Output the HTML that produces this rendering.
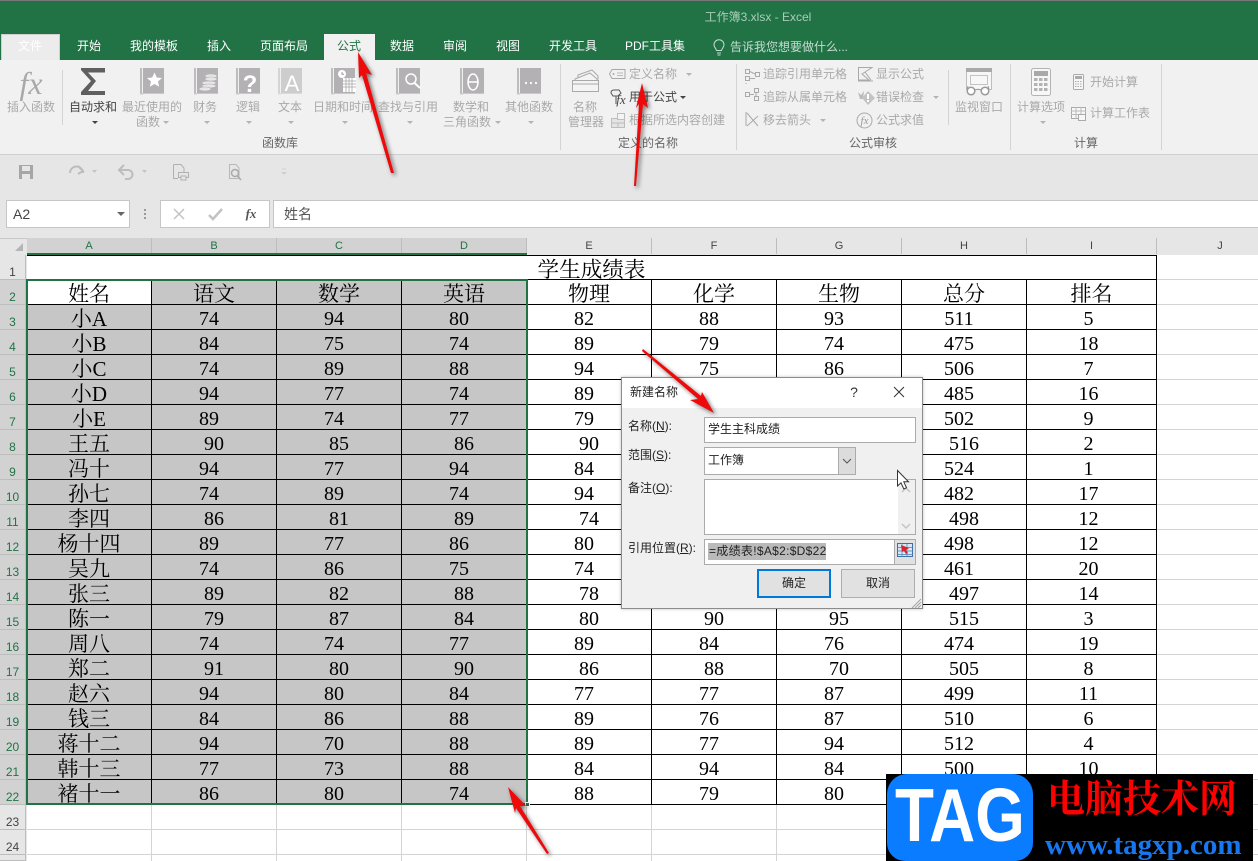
<!DOCTYPE html>
<html lang="zh"><head><meta charset="utf-8"><title>工作簿3.xlsx - Excel</title>
<style>
*{box-sizing:border-box}
html{margin:0;padding:0;width:1258px;height:861px;overflow:hidden}
body{margin:0;padding:0;width:1258px;height:861px;overflow:hidden;position:relative;background:#e6e6e6;font:12px/16px "Liberation Sans","Noto Sans CJK SC",sans-serif;color:#a9a9a9}
.a{position:absolute}
.c{position:absolute;transform:translateX(-50%);white-space:nowrap}
.l{position:absolute;white-space:nowrap}
.w{color:#fff}
.d{color:#444}
.g{color:#666}
.tri{position:absolute;width:0;height:0;border-left:3px solid transparent;border-right:3px solid transparent;border-top:3px solid #b4b4b4}
.tri.k{border-top-color:#444}
.div{position:absolute;width:1px;background:#d4d4d4}
table{position:absolute;left:27px;top:255px;border-collapse:separate;border-spacing:0;table-layout:fixed;width:1130px;font:20px/20px "Liberation Serif","Noto Serif CJK SC",serif;color:#000}
tr{height:25px}
td{height:25px;max-height:25px;padding:4px 0 0;border-right:1px solid #000;border-bottom:1px solid #000;text-align:center;white-space:nowrap;overflow:hidden;background:#fff}
td:first-child{font-size:21px}
tr:first-child td{border-top:1px solid #000;font-size:21.6px;line-height:23px;padding-top:0}
tr:first-child td span{position:relative;top:3px}
tr td:nth-child(-n+4){background:#c6c6c6}
tr:first-child td{background:#fff!important}
tr.h td{font-size:21px;line-height:19px;padding-top:5px}
tr.h td:first-child{background:#fff}
tr.s td:not(:first-child){padding-right:10px}
td:nth-child(9){padding-right:6px!important}
tr.h td:nth-child(9){padding-right:0!important}
.ch{position:absolute;top:238px;height:16px;width:125px;border-right:1px solid #bdbdbd;text-align:center;font:11px/17px "Liberation Sans",sans-serif;color:#444;background:#e6e6e6}
.ch.on{background:#d2d2d2;color:#217346;height:16px}
.rh{position:absolute;left:0;width:26px;height:25px;border-bottom:1px solid #bdbdbd;border-right:1px solid #bdbdbd;text-align:center;font:12px/34px "Liberation Sans",sans-serif;color:#444;background:#e6e6e6;overflow:hidden}
.rh.on{background:#d2d2d2;color:#217346}
.inp{position:absolute;background:#fff;border:1px solid #ababab;color:#222;padding-left:3px}
.dl{position:absolute;left:628px;color:#222;font-size:12px;white-space:nowrap}
u{text-decoration:underline}
</style></head>
<body>
<!-- title bar and tabs -->
<div class="a" style="left:0;top:0;width:1258px;height:60px;background:#217346;border-top:1px solid #777"></div>
<div class="c" style="left:758px;top:9px;color:#a9cdb9;font-size:12px">工作簿3.xlsx - Excel</div>
<div class="a" style="left:1px;top:34px;width:59px;height:26px;background:#ececec;border:1px solid #cfcfcf;border-bottom:0"></div>
<div class="c w" style="left:30px;top:38px">文件</div>
<div class="c w" style="left:89px;top:38px">开始</div>
<div class="c w" style="left:154px;top:38px">我的模板</div>
<div class="c w" style="left:219px;top:38px">插入</div>
<div class="c w" style="left:284px;top:38px">页面布局</div>
<div class="a" style="left:324px;top:34px;width:51px;height:27px;background:#f1f1f1"></div>
<div class="c" style="left:349px;top:38px;color:#217346">公式</div>
<div class="c w" style="left:402px;top:38px">数据</div>
<div class="c w" style="left:455px;top:38px">审阅</div>
<div class="c w" style="left:508px;top:38px">视图</div>
<div class="c w" style="left:573px;top:38px">开发工具</div>
<div class="c w" style="left:655px;top:38px">PDF工具集</div>
<svg class="a" style="left:712px;top:39px" width="14" height="18" viewBox="0 0 14 18" fill="none" stroke="#c4dccf" stroke-width="1"><path d="M4.500 11.500C4 9 2 8.500 2 5.800A5 5 0 0 1 12 5.800C12 8.500 10 9 9.500 11.500ZM5 14H9M5.500 16H8.500"/></svg>
<div class="l" style="left:730px;top:39px;color:#c4dccf">告诉我您想要做什么...</div>

<!-- ribbon -->
<div class="a" style="left:0;top:60px;width:1258px;height:95px;background:#f1f1f1;border-bottom:1px solid #cfcfcf"></div>
<svg class="a" style="left:0;top:60px" width="1258" height="95" viewBox="0 60 1258 95">
<defs>
<g id="bk"><rect x="0" y="0" width="2" height="26" fill="#bdbdbd"/><rect x="3" y="0" width="21" height="26" fill="#b3b1b3"/><rect x="0" y="25" width="24" height="1.500" fill="#c9c9c9"/><rect x="3" y="26" width="21" height="2" fill="#f1f1f1"/></g>
</defs>
<use href="#bk" x="140" y="68"/><path d="M154 73l2.300 5 5.200.500-4 3.500 1.200 5.300-4.700-2.800-4.700 2.800 1.200-5.300-4-3.500 5.200-.500z" fill="#fff" transform="translate(.5 -.5)"/>
<use href="#bk" x="194" y="68"/><g fill="#e6e6e6" stroke="#b3b1b3" stroke-width=".6"><ellipse cx="209" cy="83" rx="7" ry="2"/><ellipse cx="209" cy="86" rx="7" ry="2"/><ellipse cx="205" cy="89" rx="6" ry="2"/><ellipse cx="211" cy="76" rx="6" ry="2"/><ellipse cx="211" cy="79" rx="6" ry="2"/></g>
<use href="#bk" x="236" y="68"/><text x="250" y="92" font-family="Liberation Sans" font-weight="700" font-size="24" fill="#fff" text-anchor="middle">?</text>
<use href="#bk" x="278" y="68" opacity=".55"/><text x="292" y="91" font-family="Liberation Sans" font-size="22" fill="#fff" text-anchor="middle">A</text>
<use href="#bk" x="331" y="68"/><circle cx="342" cy="74" r="4" fill="#fff"/><path d="M342 72v2.300h2" stroke="#999" fill="none"/><rect x="343" y="78" width="13" height="14" fill="#fff"/><path d="M343 81h13M343 84h13M343 87h13M346 78v14M349 78v14M352 78v14" stroke="#a5a5a5" stroke-width=".8"/>
<use href="#bk" x="396" y="68"/><circle cx="411" cy="79" r="5" fill="none" stroke="#fff" stroke-width="1.500"/><path d="M414.500 83L420 88" stroke="#fff" stroke-width="2"/>
<use href="#bk" x="460" y="68"/><ellipse cx="473" cy="82" rx="5" ry="8" fill="none" stroke="#fff" stroke-width="1.500"/><path d="M468 82H478" stroke="#fff" stroke-width="1.500"/>
<use href="#bk" x="517" y="68"/><circle cx="526" cy="83" r="1.100" fill="#fff"/><circle cx="531" cy="83" r="1.100" fill="#fff"/><circle cx="536" cy="83" r="1.100" fill="#fff"/>
<!-- sigma -->
<path d="M81 68H105V72.500H88L96 81L88 91H105V95H81V92L91 81L81 70Z" fill="#5f5f5f"/>
<text x="31" y="94" font-family="Liberation Serif" font-style="italic" font-size="32" fill="#a9a9a9" text-anchor="middle">fx</text>
<!-- name manager -->
<g fill="#f4f4f4" stroke="#a9a9a9"><path d="M578 75l14-5 6 6v3l-20 0z"/><path d="M575 79l15-6 7 6v3l-22 0z"/><rect x="572.500" y="80.500" width="26" height="11"/></g>
<path d="M572 84H599" stroke="#a9a9a9"/>
<!-- define name tag -->
<path d="M612 69.500H625V78.500H612L609.500 74Z" fill="none" stroke="#a9a9a9"/><path d="M617 73h6M617 75.500h6" stroke="#a9a9a9" stroke-width=".8"/><circle cx="613.500" cy="74" r="1" fill="#a9a9a9"/>
<path d="M611 93q0-3 3-3h5l2 3-3 3h-3l-2 0z" fill="none" stroke="#555"/><text x="621" y="104" font-family="Liberation Serif" font-style="italic" font-size="13" fill="#444" text-anchor="middle">fx</text><path d="M616 96v8" stroke="#555"/>
<rect x="611.500" y="118.500" width="13" height="9" fill="#e4e4e4" stroke="#bdbdbd"/><rect x="617.500" y="113.500" width="7" height="6" fill="#f4f4f4" stroke="#bdbdbd"/><path d="M618 123v5M612 123h13" stroke="#bdbdbd"/>
<!-- trace icons -->
<g fill="none" stroke="#a9a9a9">
<rect x="745.500" y="69.500" width="4" height="4"/><rect x="745.500" y="76.500" width="4" height="4"/><rect x="755.500" y="72.500" width="4" height="4" /><path d="M750 71.500L755 74M750 78.500H755M746 84v-1"/>
<rect x="745.500" y="92.500" width="4" height="4"/><rect x="754.500" y="88.500" width="4" height="4"/><rect x="754.500" y="96.500" width="4" height="4"/><path d="M750 94.500H754M756 92v4"/>
<path d="M747 113L758 126M758 116L747 126M746 112v14"/>
<path d="M858.500 67.500H872L862 74L869 80H858.500ZM858 81H873" /><path d="M865 72l6 8" />
<circle cx="864.500" cy="120.500" r="7.500"/>
</g>
<text x="864.500" y="124" font-family="Liberation Serif" font-style="italic" font-size="11" fill="#999" text-anchor="middle">fx</text>
<path d="M858 92l3 3 3-4-1 8-3 0z" fill="#bbb"/><path d="M868 91l7 7-7 7-6-7z" fill="#c3c3c3"/><rect x="867" y="94" width="2" height="5" fill="#fff"/><rect x="867" y="100" width="2" height="2" fill="#fff"/>
<!-- watch window -->
<rect x="966.500" y="68.500" width="25" height="21" fill="#f7f7f7" stroke="#bdbdbd"/><rect x="966" y="68" width="26" height="4" fill="#a9a9a9"/><rect x="970.500" y="75.500" width="17" height="9" fill="none" stroke="#c3c3c3"/>
<g fill="#fff" stroke="#9a9a9a" stroke-width="1.500"><circle cx="971" cy="91" r="3.800"/><circle cx="985" cy="91" r="3.800"/></g><path d="M975 90q3-1.500 6 0M967 89l1-3M989 89l-1-3" stroke="#9a9a9a" fill="none"/>
<!-- calc -->
<rect x="1031.500" y="68.500" width="19" height="27" rx="2" fill="#f7f7f7" stroke="#b3b3b3"/><rect x="1034" y="71" width="14" height="5" fill="#a9a9a9"/>
<g fill="#b3b3b3"><rect x="1034" y="78" width="3.500" height="3"/><rect x="1039" y="78" width="3.500" height="3"/><rect x="1044" y="78" width="3.500" height="3"/><rect x="1034" y="83" width="3.500" height="3"/><rect x="1039" y="83" width="3.500" height="3"/><rect x="1044" y="83" width="3.500" height="3"/><rect x="1034" y="88" width="3.500" height="3"/><rect x="1039" y="88" width="3.500" height="3"/><rect x="1044" y="88" width="3.500" height="3"/></g>
<rect x="1073.500" y="74.500" width="10" height="15" rx="1" fill="#f7f7f7" stroke="#aaa"/><rect x="1075" y="76" width="7" height="3" fill="#aaa"/><path d="M1075 81.500h7M1075 84h7M1075 86.500h7" stroke="#aaa" stroke-dasharray="1.500 1"/>
<rect x="1071.500" y="107.500" width="14" height="11" fill="#f7f7f7" stroke="#aaa"/><path d="M1071 111h15M1071 114.500h15M1076 107v12M1081 107v12" stroke="#bbb"/><rect x="1078.500" y="114.500" width="7" height="6" fill="#f7f7f7" stroke="#aaa"/>
</svg>
<div class="div" style="left:62px;top:70px;height:55px"></div>
<div class="c" style="left:31px;top:99px">插入函数</div>
<div class="c d" style="left:93px;top:99px">自动求和</div>
<div class="tri k" style="left:92px;top:121px"></div>
<div class="c" style="left:152px;top:99px">最近使用的</div>
<div class="c" style="left:148px;top:114px">函数</div><div class="tri" style="left:163px;top:121px"></div>
<div class="c" style="left:205px;top:99px">财务</div><div class="tri" style="left:204px;top:121px"></div>
<div class="c" style="left:248px;top:99px">逻辑</div><div class="tri" style="left:246px;top:121px"></div>
<div class="c" style="left:290px;top:99px">文本</div><div class="tri" style="left:288px;top:121px"></div>
<div class="c" style="left:343px;top:99px">日期和时间</div><div class="tri" style="left:342px;top:121px"></div>
<div class="c" style="left:408px;top:99px">查找与引用</div><div class="tri" style="left:407px;top:121px"></div>
<div class="c" style="left:471px;top:99px">数学和</div>
<div class="c" style="left:467px;top:114px">三角函数</div><div class="tri" style="left:495px;top:121px"></div>
<div class="c" style="left:529px;top:99px">其他函数</div><div class="tri" style="left:528px;top:121px"></div>
<div class="c g" style="left:280px;top:135px">函数库</div>
<div class="div" style="left:560px;top:64px;height:86px"></div>
<div class="c" style="left:585px;top:99px">名称</div>
<div class="c" style="left:586px;top:114px">管理器</div>
<div class="l" style="left:629px;top:66px">定义名称</div><div class="tri" style="left:686px;top:73px"></div>
<div class="l d" style="left:629px;top:89px">用于公式</div><div class="tri k" style="left:680px;top:96px"></div>
<div class="l" style="left:629px;top:112px">根据所选内容创建</div>
<div class="c g" style="left:648px;top:135px">定义的名称</div>
<div class="div" style="left:736px;top:64px;height:86px"></div>
<div class="l" style="left:763px;top:66px">追踪引用单元格</div>
<div class="l" style="left:763px;top:89px">追踪从属单元格</div>
<div class="l" style="left:763px;top:112px">移去箭头</div><div class="tri" style="left:820px;top:119px"></div>
<div class="l" style="left:876px;top:66px">显示公式</div>
<div class="l" style="left:876px;top:89px">错误检查</div><div class="tri" style="left:933px;top:96px"></div>
<div class="l" style="left:876px;top:112px">公式求值</div>
<div class="c g" style="left:873px;top:135px">公式审核</div>
<div class="div" style="left:948px;top:70px;height:55px"></div>
<div class="c" style="left:979px;top:99px">监视窗口</div>
<div class="div" style="left:1010px;top:64px;height:86px"></div>
<div class="c" style="left:1041px;top:99px">计算选项</div><div class="tri" style="left:1040px;top:121px"></div>
<div class="l" style="left:1090px;top:74px">开始计算</div>
<div class="l" style="left:1090px;top:105px">计算工作表</div>
<div class="c g" style="left:1086px;top:135px">计算</div>
<div class="div" style="left:1161px;top:64px;height:86px"></div>

<!-- quick access -->
<svg class="a" style="left:0;top:155px" width="300" height="45" viewBox="0 155 300 45" fill="none">
<path d="M19 165H33V179H19Z" fill="#a6a6a6"/><rect x="22" y="166" width="8" height="5" fill="#e6e6e6"/><rect x="22" y="174" width="8" height="5" fill="#e6e6e6"/>
<path d="M83 173A6 6 0 1 0 70 173M78 166L83 171L78 174" stroke="#bdbdbd" stroke-width="2"/>
<path d="M120 170h8a4.500 4.500 0 0 1 0 9h-3M124 165L119 170L124 175" stroke="#bdbdbd" stroke-width="2"/>
<path d="M173.500 164.500H181L184 168V172" stroke="#b0b0b0"/><path d="M173.500 164.500V178.500H178" stroke="#b0b0b0"/><rect x="178.500" y="172.500" width="10" height="5" stroke="#b0b0b0" fill="#e6e6e6"/><rect x="181" y="176" width="5" height="4" fill="#e6e6e6" stroke="#b0b0b0"/>
<path d="M229.500 164.500H236L239 168V178.500H229.500Z" stroke="#b8b8b8"/><circle cx="235" cy="173" r="3.500" stroke="#a9a9a9" stroke-width="1.500"/><path d="M237.500 176L241 180" stroke="#a9a9a9" stroke-width="1.500"/>
<path d="M282 169h4" stroke="#d0d0d0"/><path d="M281 172h6l-3 3z" fill="#d0d0d0"/>
<path d="M92 170h5l-2.500 3zM142 170h5l-2.500 3z" fill="#c4c4c4"/>
</svg>

<!-- formula bar -->
<div class="a" style="left:0;top:200px;width:1258px;height:28px;background:#e6e6e6"></div>
<div class="a" style="left:6px;top:200px;width:124px;height:28px;background:#fff;border:1px solid #c6c6c6;font-size:14px;line-height:26px;padding-left:6px;color:#444">A2</div>
<div class="tri k" style="left:117px;top:212px;border-left-width:4px;border-right-width:4px;border-top-width:4px;border-top-color:#666"></div>
<div class="a" style="left:144px;top:209px;width:2px;height:2px;background:#999;box-shadow:0 4px #999,0 8px #999"></div>
<div class="a" style="left:160px;top:200px;width:110px;height:28px;background:#fff;border:1px solid #c6c6c6"></div>
<svg class="a" style="left:160px;top:200px" width="110" height="28" fill="none"><path d="M14 9L24 19M24 9L14 19" stroke="#c3c3c3" stroke-width="1.500"/><path d="M49 15L53 19L62 9" stroke="#c3c3c3" stroke-width="2.500"/><text x="91" y="18" font-family="Liberation Serif" font-style="italic" font-weight="700" font-size="13" fill="#555" text-anchor="middle">fx</text></svg>
<div class="a" style="left:273px;top:200px;width:985px;height:28px;background:#fff;border-top:1px solid #c6c6c6;border-bottom:1px solid #c6c6c6;border-left:1px solid #c6c6c6;font-size:14px;line-height:26px;padding-left:10px;color:#555">姓名</div>

<!-- column headers -->
<div class="a" style="left:0;top:238px;width:1258px;height:17px;background:#e6e6e6;border-top:1px solid #c8c8c8"></div>
<div class="a" style="left:15px;top:243px;width:0;height:0;border-left:8px solid transparent;border-bottom:8px solid #b5b5b5"></div>
<div class="ch on" style="left:27px">A</div>
<div class="ch on" style="left:152px">B</div>
<div class="ch on" style="left:277px">C</div>
<div class="ch on" style="left:402px">D</div>
<div class="ch" style="left:527px">E</div>
<div class="ch" style="left:652px">F</div>
<div class="ch" style="left:777px">G</div>
<div class="ch" style="left:902px">H</div>
<div class="ch" style="left:1027px;width:130px">I</div>
<div class="ch" style="left:1157px;width:101px;padding-left:25px;border-right:0">J</div>
<div class="a" style="left:27px;top:253px;width:500px;height:2px;background:#217346"></div>

<!-- sheet background -->
<div class="a" style="left:27px;top:255px;width:1231px;height:606px;background:#fff repeating-linear-gradient(to bottom,#fff 0 24px,#d4d4d4 24px 25px)"></div>
<div class="a" style="left:27px;top:805px;width:1231px;height:56px;background:linear-gradient(#d4d4d4,#d4d4d4) 124px 0/1px 100% no-repeat,linear-gradient(#d4d4d4,#d4d4d4) 249px 0/1px 100% no-repeat,linear-gradient(#d4d4d4,#d4d4d4) 374px 0/1px 100% no-repeat,linear-gradient(#d4d4d4,#d4d4d4) 499px 0/1px 100% no-repeat,linear-gradient(#d4d4d4,#d4d4d4) 624px 0/1px 100% no-repeat,linear-gradient(#d4d4d4,#d4d4d4) 749px 0/1px 100% no-repeat,linear-gradient(#d4d4d4,#d4d4d4) 874px 0/1px 100% no-repeat,linear-gradient(#d4d4d4,#d4d4d4) 999px 0/1px 100% no-repeat,linear-gradient(#d4d4d4,#d4d4d4) 1129px 0/1px 100% no-repeat,repeating-linear-gradient(to bottom,transparent 0 24px,#d4d4d4 24px 25px)"></div>

<!-- row headers -->
<div class="rh" style="top:255px">1</div>
<div class="rh on" style="top:280px">2</div>
<div class="rh on" style="top:305px">3</div>
<div class="rh on" style="top:330px">4</div>
<div class="rh on" style="top:355px">5</div>
<div class="rh on" style="top:380px">6</div>
<div class="rh on" style="top:405px">7</div>
<div class="rh on" style="top:430px">8</div>
<div class="rh on" style="top:455px">9</div>
<div class="rh on" style="top:480px">10</div>
<div class="rh on" style="top:505px">11</div>
<div class="rh on" style="top:530px">12</div>
<div class="rh on" style="top:555px">13</div>
<div class="rh on" style="top:580px">14</div>
<div class="rh on" style="top:605px">15</div>
<div class="rh on" style="top:630px">16</div>
<div class="rh on" style="top:655px">17</div>
<div class="rh on" style="top:680px">18</div>
<div class="rh on" style="top:705px">19</div>
<div class="rh on" style="top:730px">20</div>
<div class="rh on" style="top:755px">21</div>
<div class="rh on" style="top:780px">22</div>
<div class="rh" style="top:805px">23</div>
<div class="rh" style="top:830px">24</div>
<div class="rh" style="top:855px;height:6px"></div>

<table>
<colgroup><col style="width:125px"><col style="width:125px"><col style="width:125px"><col style="width:125px"><col style="width:125px"><col style="width:125px"><col style="width:125px"><col style="width:125px"><col style="width:130px"></colgroup>
<tr><td colspan="9"><span>学生成绩表</span></td></tr>
<tr class="h"><td>姓名</td><td>语文</td><td>数学</td><td>英语</td><td>物理</td><td>化学</td><td>生物</td><td>总分</td><td>排名</td></tr>
<tr class="s"><td>小A</td><td>74</td><td>94</td><td>80</td><td>82</td><td>88</td><td>93</td><td>511</td><td>5</td></tr>
<tr class="s"><td>小B</td><td>84</td><td>75</td><td>74</td><td>89</td><td>79</td><td>74</td><td>475</td><td>18</td></tr>
<tr class="s"><td>小C</td><td>74</td><td>89</td><td>88</td><td>94</td><td>75</td><td>86</td><td>506</td><td>7</td></tr>
<tr class="s"><td>小D</td><td>94</td><td>77</td><td>74</td><td>89</td><td>79</td><td>74</td><td>485</td><td>16</td></tr>
<tr class="s"><td>小E</td><td>89</td><td>74</td><td>77</td><td>79</td><td>82</td><td>85</td><td>502</td><td>9</td></tr>
<tr><td>王五</td><td>90</td><td>85</td><td>86</td><td>90</td><td>80</td><td>85</td><td>516</td><td>2</td></tr>
<tr class="s"><td>冯十</td><td>94</td><td>77</td><td>94</td><td>84</td><td>88</td><td>87</td><td>524</td><td>1</td></tr>
<tr class="s"><td>孙七</td><td>74</td><td>89</td><td>74</td><td>94</td><td>78</td><td>79</td><td>482</td><td>17</td></tr>
<tr><td>李四</td><td>86</td><td>81</td><td>89</td><td>74</td><td>82</td><td>86</td><td>498</td><td>12</td></tr>
<tr class="s"><td>杨十四</td><td>89</td><td>77</td><td>86</td><td>80</td><td>83</td><td>83</td><td>498</td><td>12</td></tr>
<tr class="s"><td>吴九</td><td>74</td><td>86</td><td>75</td><td>74</td><td>76</td><td>76</td><td>461</td><td>20</td></tr>
<tr><td>张三</td><td>89</td><td>82</td><td>88</td><td>78</td><td>80</td><td>80</td><td>497</td><td>14</td></tr>
<tr><td>陈一</td><td>79</td><td>87</td><td>84</td><td>80</td><td>90</td><td>95</td><td>515</td><td>3</td></tr>
<tr class="s"><td>周八</td><td>74</td><td>74</td><td>77</td><td>89</td><td>84</td><td>76</td><td>474</td><td>19</td></tr>
<tr><td>郑二</td><td>91</td><td>80</td><td>90</td><td>86</td><td>88</td><td>70</td><td>505</td><td>8</td></tr>
<tr class="s"><td>赵六</td><td>94</td><td>80</td><td>84</td><td>77</td><td>77</td><td>87</td><td>499</td><td>11</td></tr>
<tr class="s"><td>钱三</td><td>84</td><td>86</td><td>88</td><td>89</td><td>76</td><td>87</td><td>510</td><td>6</td></tr>
<tr class="s"><td>蒋十二</td><td>94</td><td>70</td><td>88</td><td>89</td><td>77</td><td>94</td><td>512</td><td>4</td></tr>
<tr class="s"><td>韩十三</td><td>77</td><td>73</td><td>88</td><td>84</td><td>94</td><td>84</td><td>500</td><td>10</td></tr>
<tr class="s"><td>褚十一</td><td>86</td><td>80</td><td>74</td><td>88</td><td>79</td><td>80</td><td>497</td><td>13</td></tr>
</table>

<!-- selection -->
<div class="a" style="left:26px;top:279px;width:502px;height:526px;border:2px solid #217346"></div>
<div class="a" style="left:525px;top:802px;width:5px;height:5px;background:#217346;border:1px solid #fff"></div>

<!-- dialog -->
<div class="a" style="left:621px;top:377px;width:302px;height:232px;background:#f0f0f0;border:1px solid #8c8c8c;box-shadow:0 0 3px rgba(0,0,0,.25)"></div>
<div class="a" style="left:622px;top:378px;width:300px;height:30px;background:#fff"></div>
<div class="l" style="left:630px;top:384px;color:#222">新建名称</div>
<div class="c" style="left:854px;top:384px;color:#333;font-size:14px">?</div>
<svg class="a" style="left:893px;top:386px" width="12" height="12" stroke="#333" fill="none"><path d="M1 1L11 11M11 1L1 11"/></svg>
<div class="dl" style="top:418px">名称(<u>N</u>):</div>
<div class="inp" style="left:704px;top:417px;width:212px;height:26px;line-height:22px">学生主科成绩</div>
<div class="dl" style="top:447px">范围(<u>S</u>):</div>
<div class="inp" style="left:704px;top:447px;width:152px;height:28px;line-height:25px">工作簿</div>
<div class="a" style="left:838px;top:447px;width:18px;height:28px;background:#dcdcdc;border:1px solid #ababab"></div>
<svg class="a" style="left:842px;top:458px" width="10" height="6" fill="none" stroke="#555"><path d="M1 1L5 5L9 1"/></svg>
<div class="dl" style="top:480px">备注(<u>O</u>):</div>
<div class="inp" style="left:704px;top:479px;width:212px;height:56px"></div>
<div class="a" style="left:898px;top:480px;width:17px;height:54px;background:#f0f0f0"></div>
<svg class="a" style="left:900px;top:485px" width="12" height="45" fill="none" stroke="#c4c4c4" stroke-width="1.500"><path d="M2 7L6 3L10 7M2 39L6 43L10 39"/></svg>
<div class="dl" style="top:540px">引用位置(<u>R</u>):</div>
<div class="inp" style="left:704px;top:539px;width:212px;height:26px"></div>
<div class="a" style="left:708px;top:543px;width:118px;height:17px;background:#bababa;color:#222;line-height:17px;white-space:nowrap;overflow:hidden;letter-spacing:.3px;padding-left:1px">=成绩表!$A$2:$D$22</div>
<div class="a" style="left:894px;top:540px;width:21px;height:24px;background:#e1e1e1;border-left:1px solid #ababab"></div>
<svg class="a" style="left:897px;top:543px" width="16" height="15"><rect x=".5" y=".5" width="15" height="13" fill="#d9e6f3" stroke="#3d6fa5"/><path d="M0 4.500H16M0 8H16M0 11.500H16M5 0V14M10 0V14" stroke="#4d7fb5" stroke-width=".7"/><path d="M4 2L12 5L9 7L11 10L9 11L7 8L5 9Z" fill="#d8252b"/></svg>
<div class="a" style="left:757px;top:569px;width:74px;height:29px;background:#e1e1e1;border:2px solid #0078d7;color:#222;text-align:center;line-height:25px">确定</div>
<div class="a" style="left:841px;top:569px;width:74px;height:29px;background:#e1e1e1;border:1px solid #adadad;color:#222;text-align:center;line-height:27px">取消</div>
<svg class="a" style="left:910px;top:597px" width="12" height="12" stroke="#a5a5a5" fill="none"><path d="M11 2L2 11M11 5L5 11M11 8L8 11"/></svg>
<svg class="a" style="left:895px;top:468px" width="16" height="24"><path d="M2.500 2.500V18L6 14.800L8.800 21L11.500 19.800L8.800 13.800H13.500Z" fill="#fff" stroke="#333"/></svg>

<!-- arrows -->
<svg class="a" style="left:0;top:0;filter:drop-shadow(2px 2px 2px rgba(0,0,0,.55))" width="1258" height="861" fill="#ee0a0a">
<polygon points="358,52 372,75 366,73 394,173 391,173 362,75 359,78"/>
<polygon points="642,83 648,108 643,104 636,186 634,186 639,104 636,108"/>
<polygon points="714,413 690,400 698,399 642,351 643,349 701,396 702,392"/>
<polygon points="508,787 526,806 520,806 549,853 547,854 516,808 515,813"/>
</svg>

<!-- watermark -->
<div class="a" style="left:886px;top:774px;width:367px;height:87px;background:#000;overflow:hidden">
<div class="a" style="left:1px;top:0;width:146px;height:87px;background:#0a7cff;border-radius:20px 20px 18px 18px"></div>
<div class="a" style="left:-2px;top:0;width:146px;height:83px;color:#fff;font:700 75px/83px 'Liberation Sans',sans-serif;text-align:center;transform:scaleX(.85)">TAG</div>
<div class="l" style="left:161px;top:2px;color:#f00;font:700 38px/40px 'Noto Serif CJK SC','Noto Sans CJK SC',serif">电脑技术网</div>
<div class="l" style="left:159px;top:55px;color:#1877ee;font:700 29px/33px 'Liberation Serif',serif">www.tagxp.com</div>
</div>
</body></html>
